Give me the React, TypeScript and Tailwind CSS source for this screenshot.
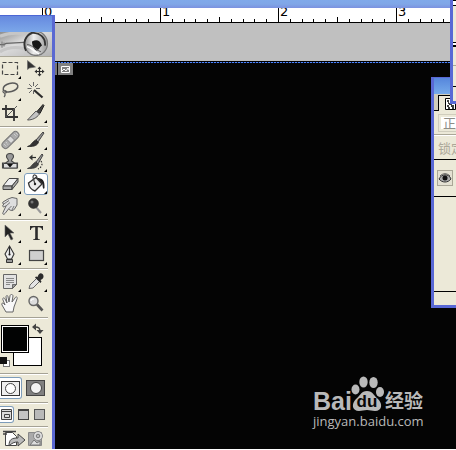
import React from "react";

type Tool = { name: string; art: React.ReactNode; menu?: boolean; active?: boolean };

const Art = ({ children }: { children: React.ReactNode }) => (
  <svg viewBox="0 0 22 22" className="h-[22px] w-[22px] shrink-0" fill="none" stroke="#2c2c2c" strokeWidth="1.200">
    {children}
  </svg>
);

const groups: Tool[][] = [
  [
    { name: "Marquee", menu: true, art: <path d="M2.500 4.500h15v12h-15z" stroke="#444" strokeWidth="1.200" strokeDasharray="4 2" /> },
    {
      name: "Move",
      art: (
        <>
          <path d="M2.500 2.500v9l2-1.500 6-1z" fill="#333" stroke="#666" strokeWidth=".6" />
          <path d="M10 13.500h9M14.500 9v9" strokeWidth="1.200" />
          <path d="M14.500 8.500l2 2.500h-4zM14.500 18.500l2-2.500h-4zM9.500 13.500l2.500-2v4zM19.500 13.500l-2.500-2v4z" fill="#333" stroke="none" />
        </>
      ),
    },
    {
      name: "Lasso",
      menu: true,
      art: (
        <>
          <ellipse cx="10.500" cy="7.500" rx="7.500" ry="4.200" transform="rotate(-14 10.500 7.500)" stroke="#5a5a5a" strokeWidth="1.500" />
          <path d="M4 10c-2 1-1 3 1 3s2-2 0-2.500M4.500 13c1 1.500.5 3-.5 4" stroke="#5a5a5a" />
        </>
      ),
    },
    {
      name: "Magic wand",
      art: (
        <>
          <path d="M9 10l8.500 7.500" strokeWidth="2.200" />
          <path d="M8.500 2v4M8.500 11v3M2.500 8.500h4M11 8.500h4M4 4l3 3M13 4l-3 3M4 13l3-3" stroke="#666" strokeWidth="1" />
        </>
      ),
    },
    {
      name: "Crop",
      art: (
        <>
          <path d="M6 3v12h12M2 7h12v12" stroke="#333" strokeWidth="1.800" />
          <path d="M6 15L17 4" stroke="#555" strokeWidth="1" />
        </>
      ),
    },
    {
      name: "Slice",
      menu: true,
      art: (
        <>
          <path d="M12 9.500l6-7 1 1-4 8z" fill="#444" stroke="#222" strokeWidth="1" />
          <path d="M11 9l3.500 3c-3 4-7 6-12 6z" fill="#c4c4c4" stroke="#555" strokeWidth="1" />
        </>
      ),
    },
  ],
  [
    {
      name: "Healing brush",
      menu: true,
      art: (
        <>
          <rect x="0" y="7.500" width="21" height="7" rx="3.500" transform="rotate(-45 10.500 11)" fill="#aaa" stroke="#777" strokeWidth="1" />
          <path d="M7 10.500l4 4 3.500-3.500-4-4z" fill="#dcdcdc" stroke="#777" strokeWidth=".8" />
          <path d="M4 15l3 3M6 13l2 3M14 5l3 3M16 4l2 2" stroke="#ddd" strokeWidth="1" strokeDasharray="1 1" />
        </>
      ),
    },
    {
      name: "Brush",
      menu: true,
      art: (
        <>
          <path d="M11 11l7-8 1 1-6 9z" fill="#999" stroke="#444" strokeWidth="1" />
          <path d="M10.500 11l3 2.500c-2 4-6 4-11 4 4-1 4-4 8-6.500z" fill="#333" stroke="#222" strokeWidth=".8" />
        </>
      ),
    },
    {
      name: "Clone stamp",
      menu: true,
      art: (
        <>
          <path d="M8.500 10c0-2-2-2.500-2-4.500 0-4 7-4 7 0 0 2-2 2.500-2 4.500l3 2h3v5h-15v-5h3z" fill="#999" stroke="#444" strokeWidth="1.100" />
          <path d="M3.500 12.500h13.500v4.500H3.500z" fill="#ddd" stroke="#444" strokeWidth="1" />
          <path d="M7 13h6l-3 3.500z" fill="#111" stroke="none" />
        </>
      ),
    },
    {
      name: "History brush",
      menu: true,
      art: (
        <>
          <path d="M11 11l6-8 1 1-5 9z" fill="#999" stroke="#444" strokeWidth="1" />
          <path d="M10.500 11l3 2.500c-2 4-6 4-11 4 4-1 4-4 8-6.500z" fill="#444" stroke="#333" strokeWidth=".8" />
          <path d="M6 6.500h5" />
          <path d="M4 6.500l3.500-3v6z" fill="#333" stroke="none" />
          <path d="M16 10c2 3 1 6-3 8" strokeDasharray="1.500 1.500" />
        </>
      ),
    },
    {
      name: "Eraser",
      menu: true,
      art: (
        <>
          <path d="M3 13l6-7.500h9L12 13z" fill="#efefef" stroke="#444" strokeWidth="1" />
          <path d="M3 13h9v3.500H3zM12 13l6-7.500V9l-6 7.500z" fill="#aaa" stroke="#444" strokeWidth="1" />
        </>
      ),
    },
    {
      name: "Paint bucket",
      menu: true,
      active: true,
      art: (
        <>
          <path d="M3.500 10L11 4.500l6 6.500-7 7c-3-1-6-4-6.500-8z" fill="#ececec" stroke="#333" strokeWidth="1.400" />
          <path d="M10 11L8 4.500c0-4 4-3 4 1" stroke="#444" />
          <path d="M12 5c5 0 8 2 7.500 10-1 2-2 0-2-4z" fill="#222" stroke="none" />
          <circle cx="10" cy="11" r="1.200" fill="#222" stroke="none" />
        </>
      ),
    },
    {
      name: "Smudge",
      menu: true,
      art: (
        <>
          <path d="M3 17.500c-1 2 1 2.500 2 1l3.500-4.500c2 2 5 2 6 0l2.500-4V3.500L12 2.500 8 4 3 7c-1 1.500 0 2 1.500 1.500L3 10c-1 1.500.5 2.500 1.500 1.500L6 11z" fill="#dedede" stroke="#666" strokeWidth="1" />
          <path d="M4.500 8.500L9 5.500M6 11l4-3.500M8.500 14l3-3M12 15l2-4" stroke="#777" strokeWidth="1" />
        </>
      ),
    },
    {
      name: "Burn",
      menu: true,
      art: (
        <>
          <path d="M11 12l5 6" stroke="#999" strokeWidth="2" />
          <circle cx="8.500" cy="8.500" r="5" fill="#333" stroke="#222" strokeWidth=".5" />
          <circle cx="7" cy="7" r="1.500" fill="#777" stroke="none" />
        </>
      ),
    },
  ],
  [
    { name: "Path selection", menu: true, art: <path d="M5 3v12l3-3 3 6 2-1-3-6h4z" fill="#222" stroke="#666" strokeWidth=".6" /> },
    {
      name: "Type",
      menu: true,
      art: <path d="M5 4h13v4h-.8c-.4-2-1.200-2.800-3.400-2.800h-1V16c0 1 .5 1.200 2 1.300v.7H8.200v-.7c1.500-.1 2-.3 2-1.300V5.200h-1C7 5.200 6.200 6 5.800 8H5z" fill="#2c2c2c" stroke="none" />,
    },
    {
      name: "Pen",
      menu: true,
      art: (
        <>
          <path d="M9.500 2l4.500 8-2.500 5h-4L5 10z" fill="#eee" stroke="#333" strokeWidth="1.100" />
          <path d="M9.500 3v7" />
          <path d="M6.500 15.500h6v3h-6z" fill="#999" stroke="#333" strokeWidth="1" />
          <circle cx="9.500" cy="10.500" r="1.100" fill="#222" stroke="none" />
        </>
      ),
    },
    { name: "Rectangle", menu: true, art: <rect x="4.500" y="6.500" width="14" height="10" fill="#cfcfcf" stroke="#444" strokeWidth="1.200" /> },
  ],
  [
    {
      name: "Notes",
      menu: true,
      art: (
        <>
          <path d="M3.500 3.500h13v10l-4 4h-9z" fill="#e2e2e2" stroke="#666" strokeWidth="1" />
          <path d="M6 7.500h8M6 9.500h8M6 11.500h8M6 13.500h4" stroke="#888" strokeWidth="1" />
          <path d="M12.500 17.500v-4h4z" fill="#999" stroke="#555" strokeWidth=".8" />
        </>
      ),
    },
    {
      name: "Eyedropper",
      menu: true,
      art: (
        <>
          <path d="M4 17.500l1-3.500 6.500-6.500 3 3L8 17z" fill="#e4e4e4" stroke="#666" strokeWidth="1" />
          <path d="M10 6.500l5.500 5.500 1-1.500-1-1.500c3-1 4-4 2-6s-4 0-5 3l-1.500-.5z" fill="#2c2c2c" stroke="none" />
        </>
      ),
    },
    {
      name: "Hand",
      art: <path d="M6 19l-4-7c-1-2 1-3 3 0L3 7c-1-2 1-3 2-1l2 4-1-6c0-2 2-2 2 0l1 5 1-6c0-2 3-2 3 0l-1 6 3-4c1-2 3-1 2 1l-3 8-1 5z" fill="#f8f8f8" stroke="#666" strokeWidth="1" />,
    },
    {
      name: "Zoom",
      art: (
        <>
          <path d="M12 11.500l5.500 6" stroke="#555" strokeWidth="2.600" />
          <circle cx="8.500" cy="8" r="4.500" fill="#ddd" stroke="#666" strokeWidth="1.400" />
          <path d="M6 8c0-1 1-2 3-2" stroke="#fff" />
        </>
      ),
    },
  ],
];

const Divider = () => <div className="mt-[2px] mb-px h-[2px] w-[48px] shrink-0 border-t border-[#a5a295] bg-white" />;

const ToolButton = ({ tool }: { tool: Tool }) => (
  <button
    aria-label={tool.name}
    aria-pressed={!!tool.active}
    className={`relative flex h-[22px] items-center justify-center overflow-hidden ${tool.active ? "rounded-[3px] bg-white outline-1 -outline-offset-1 outline-[#7d9cba]" : ""}`}
  >
    <Art>{tool.art}</Art>
    {tool.menu && (
      <svg viewBox="0 0 3 3" className="absolute right-[1px] bottom-[1px] h-[3px] w-[3px]">
        <path d="M3 0v3H0z" fill="#000" />
      </svg>
    )}
  </button>
);

const Ruler = () => (
  <div className="flex h-[15px] shrink-0 overflow-hidden border-b border-black bg-white pl-[42px]">
    {["0", "1", "2", "3", "4", "5", "6", "7", "8"].map((n) => (
      <div key={n} className="relative flex w-[118px] shrink-0 items-end">
        {Array.from({ length: 10 }, (_, i) => (
          <span key={i} className={`flex-1 border-l border-black ${i === 0 ? "h-[14px]" : i === 5 ? "h-[5px]" : "h-[3px]"}`} />
        ))}
        <span className="absolute -top-[4px] left-[2px] font-['DejaVu_Sans',sans-serif] text-[13px] leading-[15px] text-black">{n}</span>
      </div>
    ))}
  </div>
);

const EyeBanner = () => (
  <svg viewBox="0 0 52 23" className="h-[24px] w-full shrink-0" preserveAspectRatio="none">
    <defs>
      <linearGradient id="skin" x1="0" y1="0" x2="1" y2="1">
        <stop offset="0" stopColor="#8f8f8f" />
        <stop offset=".4" stopColor="#dcdcdc" />
        <stop offset="1" stopColor="#b4b4b4" />
      </linearGradient>
      <linearGradient id="lens" x1="0" y1="0" x2="1" y2="0">
        <stop offset="0" stopColor="#999" />
        <stop offset=".4" stopColor="#eee" />
        <stop offset="1" stopColor="#999" />
      </linearGradient>
    </defs>
    <path d="M0 0h52v23H0z" fill="url(#skin)" />
    <path d="M0 4c8-3 16-4 26-2M0 19c9-5 16-5 24-3" stroke="#c6c6c6" strokeWidth="3" fill="none" />
    <path d="M0 12h4l2-1 18-1" stroke="#666" strokeWidth="1.200" fill="none" />
    <path d="M2 9v6M4 10v4" stroke="#777" />
    <ellipse cx="36" cy="11" rx="11.500" ry="11.500" fill="url(#lens)" stroke="#777" strokeWidth="1.200" />
    <path d="M26 18c-4-8 0-15 6-17M31 1c9-1 15 5 14 12" stroke="#333" strokeWidth="1.800" fill="none" />
    <path d="M32 9c4-2 8-2 10 4-2 1-2 3-5 5-3-1-5-5-5-9z" fill="#181818" />
    <path d="M27 12c5 0 8 5 14 7" stroke="#666" strokeWidth="1" fill="none" />
    <path d="M27 14c4 1 8 5 12 7" stroke="#fff" strokeWidth="1.200" fill="none" />
  </svg>
);

const Toolbox = () => (
  <aside className="absolute top-[15px] bottom-px left-0 flex w-[55px] flex-col overflow-hidden border-t border-r-[3px] border-t-[#4c66d4] border-r-[#5a68d2] bg-[#ece9d8]">
    <div className="h-[16px] shrink-0 bg-gradient-to-b from-[#6689df] to-[#7ba7e9]" />
    <EyeBanner />
    <div className="mb-px h-px shrink-0 bg-[#aaa797]" />
    {groups.map((group, g) => (
      <React.Fragment key={g}>
        <div className="grid shrink-0 grid-cols-[22px_24px] gap-x-[2px]">
          {group.map((tool) => (
            <ToolButton key={tool.name} tool={tool} />
          ))}
        </div>
        <Divider />
      </React.Fragment>
    ))}
    <button aria-label="Foreground and background colours" className="h-[51px] w-[48px] shrink-0">
      <svg viewBox="0 0 48 51" className="h-[51px] w-[48px]">
        <rect x="13.500" y="17.500" width="28" height="28" fill="#fff" stroke="#000" />
        <rect x="1" y="5" width="28" height="28" fill="#fff" />
        <rect x="1.500" y="5.500" width="27" height="27" fill="none" stroke="#000" />
        <rect x="3" y="7" width="24" height="24" fill="#020303" />
        <path d="M35 7c4 0 5 1 5 5" fill="none" stroke="#444" strokeWidth="1.500" />
        <path d="M32 7l4-3.500v7zM40 14l-3.500-4h7z" fill="#444" />
        <rect x="3.500" y="40.500" width="6" height="6" fill="#fff" stroke="#777" />
        <path d="M0 37h7v7H0z" fill="#111" />
      </svg>
    </button>
    <Divider />
    <div className="flex h-[24px] shrink-0 items-center gap-[4px]">
      <button aria-label="Standard mode" className="flex h-[22px] w-[22px] items-center justify-center rounded-r-[3px] border border-l-0 border-[#7d9cba] bg-white">
        <span className="flex h-[15px] w-[19px] items-center justify-center border border-[#333] bg-[#eee]">
          <span className="h-[11px] w-[11px] rounded-full border border-[#444] bg-white" />
        </span>
      </button>
      <button aria-label="Quick mask mode" className="flex h-[16px] w-[19px] items-center justify-center border border-[#444] bg-[#808080]">
        <span className="h-[12px] w-[12px] rounded-full border border-[#444] bg-[#f4f4f4]" />
      </button>
    </div>
    <Divider />
    <div className="flex h-[19px] shrink-0 items-center gap-[4px]">
      <button aria-label="Standard screen" className="flex h-[17px] w-[14px] items-center justify-center rounded-r-[3px] border border-l-0 border-[#7d9cba] bg-white">
        <svg viewBox="0 0 12 12" className="h-[12px] w-[12px]" fill="#ddd" stroke="#444">
          <path d="M.5 .5h10v10H.5zM.5 2.500h10M3.500 5.500h5v3h-5z" />
        </svg>
      </button>
      <button aria-label="Full screen with menu" className="h-[11px] w-[11px] border border-t-2 border-[#444] bg-[#c4c4c4]" />
      <button aria-label="Full screen" className="ml-px h-[11px] w-[11px] border border-[#555] bg-[#b9b9b9]" />
    </div>
    <Divider />
    <button aria-label="Jump to image editor" className="h-[20px] w-[48px] shrink-0">
      <svg viewBox="0 0 48 20" className="h-[20px] w-[48px]" stroke="#444">
        <path d="M5.500 3.500h7l4 4v9h-11z" fill="#fff" />
        <path d="M3 2.500h13M3 5h4" strokeWidth="1.500" />
        <path d="M9 17c0-7 3-8 9-8V5l7 6-7 6v-4c-4 0-6 1-9 4z" fill="#bbb" />
        <path d="M28.500 3.500h13v13h-13z" fill="#aaa" stroke="#888" />
        <circle cx="38" cy="7" r="4.500" fill="#ddd" stroke="#888" />
        <circle cx="38" cy="7" r="1.800" fill="#bbb" stroke="#777" />
        <path d="M30 16l4-5 3 3 3-2v4z" fill="#ddd" stroke="#777" />
      </svg>
    </button>
  </aside>
);

const LayersPalette = () => (
  <aside className="absolute top-[77px] right-0 flex h-[231px] w-[25px] flex-col overflow-hidden border-t border-b-[3px] border-l-[3px] border-[#5968d5] bg-[#ece9d8] font-['Noto_Sans_CJK_SC',sans-serif] text-[13px]">
    <div className="h-[16px] shrink-0 bg-gradient-to-b from-[#5686dc] to-[#76aaea]" />
    <div className="flex h-[17px] shrink-0 items-end bg-[#d0cdbd]">
      <div className="h-full w-[5px] border-b border-black" />
      <div className="h-[16px] flex-1 border-t border-l border-black bg-[#ece9d8] pt-[2px] pl-[6px]">
        <svg viewBox="0 0 11 12" className="h-[12px] w-[11px]" fill="#fff" stroke="#000">
          <path d="M.5 .5h10v11H.5z" />
          <path d="M2 3h2M5 2h3M3 5h1M6 4h2M4 6h3M2 8h2M6 8h3M3 10h2M7 10h2" fill="none" strokeWidth="1.500" />
        </svg>
      </div>
    </div>
    <div className="flex h-[24px] shrink-0 items-center border-b border-[#aaa797] pl-[4px]">
      <div className="h-[18px] shrink-0 border border-[#d0cdbd] p-[2px]">
        <div className="w-[18px] overflow-hidden bg-white pl-[2px] leading-[12px] text-[#8d8c87] antialiased">正</div>
      </div>
    </div>
    <div className="flex h-[24px] shrink-0 items-center overflow-hidden border-t border-white pl-[4px] leading-[16px] whitespace-nowrap text-[#aca899] antialiased">锁定</div>
    <div className="flex h-[37px] shrink-0 items-center border-t border-black pl-[3px]">
      <button aria-label="Layer visibility" className="flex h-[16px] w-[16px] items-center justify-center border border-[#aaa797] bg-[#e4e1d2]">
        <svg viewBox="0 0 14 12" className="h-[12px] w-[14px]">
          <path d="M1 7c2-5 10-6 12 0-3 4-9 4-12 0z" fill="#aaa" stroke="#333" />
          <circle cx="7" cy="6" r="2.500" fill="#111" />
          <path d="M2 4c3-3 7-3 10 0" stroke="#555" fill="none" />
        </svg>
      </button>
    </div>
    <div className="flex-1 border-y border-black" />
    <div className="h-[13px] shrink-0" />
  </aside>
);

const CornerPalette = () => (
  <aside className="absolute top-0 right-0 h-[104px] w-[6px] border-b-[3px] border-l-[3px] border-[#5968d5] bg-[#ece9d8]">
    <div className="h-[6px] border-y border-black bg-white" />
    <div className="h-[37px] border-b border-black" />
    <div className="h-[4px] border-b-2 border-black bg-white" />
    <div className="h-[19px] border-b border-[#aaa797]" />
    <div className="h-[21px] border-b border-black" />
  </aside>
);

const Watermark = () => (
  <div className="absolute right-[29px] bottom-[20px] w-[114px] text-[#b9b9b9] antialiased">
    <div className="flex h-[38px] items-end">
      <span className="w-[40px] shrink-0 font-['Liberation_Sans',sans-serif] text-[25px] leading-[24px] font-bold">Bai</span>
      <span className="relative flex h-[38px] w-[28px] shrink-0 items-end justify-center">
        <svg viewBox="0 0 28 38" className="absolute inset-0 h-[38px] w-[28px] overflow-visible" fill="#b9b9b9">
          <ellipse cx="2.500" cy="14.500" rx="4" ry="5" />
          <ellipse cx="10.500" cy="7" rx="4.200" ry="5.500" />
          <ellipse cx="20.500" cy="7.500" rx="4.200" ry="5.500" />
          <ellipse cx="27" cy="17" rx="4" ry="5" />
          <path d="M14 16c6 0 6 4 11 8 5 5 4 12-3 12-3 0-5-1-8-1s-5 1-8 1c-7 0-8-7-3-12 5-4 5-8 11-8z" />
        </svg>
        <span className="relative pb-[3px] font-['Liberation_Sans',sans-serif] text-[17px] leading-[17px] font-bold text-[#080808]">du</span>
      </span>
      <span className="pb-[2px] pl-[4px] font-['Noto_Sans_CJK_SC',sans-serif] text-[19px] leading-[22px] font-bold whitespace-nowrap">经验</span>
    </div>
    <div className="font-['Open_Sans',sans-serif] text-[13px] leading-[16px] whitespace-nowrap">jingyan.baidu.com</div>
  </div>
);

export default function App() {
  return (
    <div className="relative flex h-screen flex-col overflow-hidden bg-white pb-px">
      <header className="h-[8px] shrink-0 bg-gradient-to-b from-[#80a9ea] via-[#80a7e7] to-[#7b91e0]" />
      <Ruler />
      <div className="h-[38px] shrink-0 bg-[#c0c0c0]" />
      <main className="relative flex flex-1 flex-col border-t border-black bg-[#040404] pl-[55px]">
        <div className="h-px bg-[repeating-linear-gradient(90deg,#4c86ff_0_2px,#0a1640_2px_3px)]" />
        <div className="flex h-[12px] gap-px">
          <span className="w-[2px] bg-[#777]" />
          <span className="flex w-[15px] items-center justify-center bg-[#808080]">
            <svg viewBox="0 0 9 7" className="h-[7px] w-[9px]" fill="none" stroke="#fff">
              <path d="M.5 .5h8v6h-8zM1 5l2-2 2 2 2-3 1 2" />
            </svg>
          </span>
        </div>
        <Watermark />
      </main>
      <Toolbox />
      <LayersPalette />
      <CornerPalette />
    </div>
  );
}
